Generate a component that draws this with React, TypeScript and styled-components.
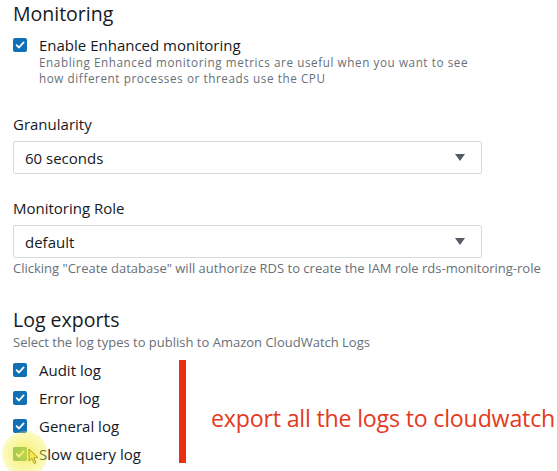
import React from "react";
import styled, { createGlobalStyle } from "styled-components";

const Global = createGlobalStyle`
  html, body { margin: 0; padding: 0; background: #ffffff; }
  body { font-family: "Open Sans", "Noto Sans", sans-serif; color: #16191f; }
`;

const Page = styled.div`
  position: relative;
  width: 557px;
  height: 471px;
  overflow: hidden;
  padding: 0 0 0 13px;
  box-sizing: border-box;
  display: flex;
  flex-direction: column;
`;

const Heading = styled.h2<{ $top: number }>`
  margin: ${(p) => p.$top}px 0 0 0;
  font-size: 19.5px;
  font-weight: 400;
  line-height: 24px;
  color: #16191f;
`;

const CheckRow = styled.label<{ $top: number }>`
  display: flex;
  align-items: flex-start;
  gap: 12px;
  margin-top: ${(p) => p.$top}px;
`;

const Box = styled.span<{ $tint?: string }>`
  flex: none;
  width: 14px;
  height: 14px;
  margin-top: 2px;
  border-radius: 2px;
  background: ${(p) => p.$tint || "#1170b5"};
  display: flex;
  align-items: center;
  justify-content: center;
`;

const CheckText = styled.div`
  display: flex;
  flex-direction: column;
`;

const CheckLabel = styled.span`
  font-size: 15px;
  line-height: 18px;
  color: #16191f;
`;

const Desc = styled.div<{ $top?: number; $compact?: boolean }>`
  margin-top: ${(p) => p.$top ?? 0}px;
  font-size: ${(p) => (p.$compact ? "11.7px" : "13px")};
  letter-spacing: ${(p) => (p.$compact ? "0.58px" : "0")};
  line-height: ${(p) => (p.$compact ? "16px" : "17px")};
  color: #687078;
  white-space: nowrap;
`;

const Label = styled.div<{ $top: number }>`
  margin-top: ${(p) => p.$top}px;
  font-size: 15px;
  line-height: 18px;
  color: #16191f;
`;

const Select = styled.div<{ $top: number }>`
  margin-top: ${(p) => p.$top}px;
  width: 469px;
  height: 33px;
  box-sizing: border-box;
  border: 1px solid #d5dbdb;
  border-radius: 2px;
  display: flex;
  align-items: center;
  justify-content: space-between;
  padding: 0 16px 0 11px;
  font-size: 15px;
  color: #16191f;
`;

const Arrow = styled.span`
  width: 0;
  height: 0;
  border-left: 5px solid transparent;
  border-right: 5px solid transparent;
  border-top: 7px solid #545b64;
`;

const LogArea = styled.div`
  margin-top: 9px;
  display: flex;
  align-items: stretch;
`;

const LogList = styled.div`
  width: 166px;
  display: flex;
  flex-direction: column;
  gap: 10px;
  padding-top: 1px;
`;

const RedBar = styled.div`
  width: 7px;
  height: 103px;
  background: #ea2f14;
`;

const Note = styled.div`
  margin-left: 25px;
  align-self: center;
  padding-top: 12px;
  font-family: "Open Sans", "Noto Sans", sans-serif;
  font-size: 23.2px;
  letter-spacing: -0.2px;
  color: #e43a1e;
  white-space: nowrap;
`;

const Glow = styled.div`
  position: absolute;
  left: 2px;
  top: 431px;
  width: 46px;
  height: 46px;
  border-radius: 50%;
  background: radial-gradient(circle, rgba(240, 235, 60, 0.75) 0%, rgba(245, 240, 80, 0.45) 55%, rgba(255, 255, 120, 0) 100%);
  pointer-events: none;
`;

const Cursor = styled.svg`
  position: absolute;
  left: 28px;
  top: 448px;
  pointer-events: none;
`;

const Tick = () => (
  <svg width="10" height="10" viewBox="0 0 10 10">
    <path d="M1.6 5.2 L4 7.5 L8.6 2.4" fill="none" stroke="#fff" strokeWidth="1.8" strokeLinecap="round" strokeLinejoin="round" />
  </svg>
);

const logs = ["Audit log", "Error log", "General log", "Slow query log"];

export default function App() {
  return (
    <>
      <Global />
      <Page>
        <Heading $top={2}>Monitoring</Heading>
        <CheckRow $top={10}>
          <Box>
            <Tick />
          </Box>
          <CheckText>
            <CheckLabel>Enable Enhanced monitoring</CheckLabel>
            <Desc $compact>Enabling Enhanced monitoring metrics are useful when you want to see</Desc>
            <Desc $compact>how different processes or threads use the CPU</Desc>
          </CheckText>
        </CheckRow>
        <Label $top={29}>Granularity</Label>
        <Select $top={8}>
          <span>60 seconds</span>
          <Arrow />
        </Select>
        <Label $top={25}>Monitoring Role</Label>
        <Select $top={8}>
          <span>default</span>
          <Arrow />
        </Select>
        <Desc $top={2}>
          Clicking "Create database" will authorize RDS to create the IAM role rds-monitoring-role
        </Desc>
        <Heading $top={31}>Log exports</Heading>
        <Desc $top={2}>Select the log types to publish to Amazon CloudWatch Logs</Desc>
        <LogArea>
          <LogList>
            {logs.map((l, i) => (
              <CheckRow key={l} $top={0}>
                <Box $tint={i === 3 ? "#3f9a6a" : undefined}>
                  <Tick />
                </Box>
                <CheckLabel>{l}</CheckLabel>
              </CheckRow>
            ))}
          </LogList>
          <RedBar />
          <Note>export all the logs to cloudwatch</Note>
        </LogArea>
        <Glow />
        <Cursor width="12" height="17" viewBox="0 0 12 17">
          <path d="M1 1 L1 13 L4 10.5 L6.2 15.5 L8 14.7 L5.9 9.8 L10 9.6 Z" fill="#f5e84a" stroke="#9a8a20" strokeWidth="0.8" />
        </Cursor>
      </Page>
    </>
  );
}
